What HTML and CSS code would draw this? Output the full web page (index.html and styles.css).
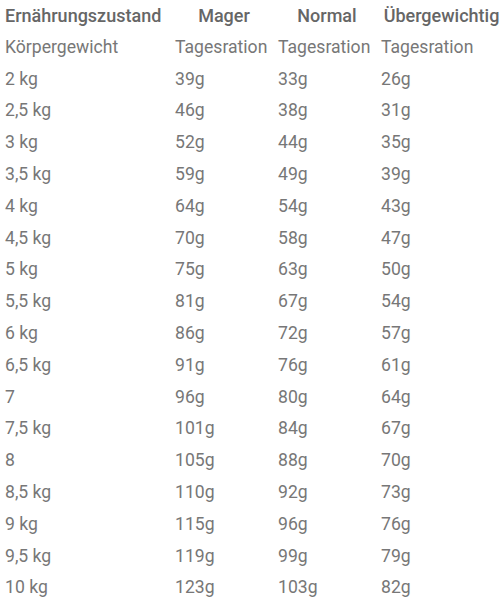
FILE: index.html
```html
<!DOCTYPE html>
<html lang="de">
<head>
<meta charset="utf-8">
<link rel="stylesheet" href="styles.css">
</head>
<body>
<table class="ration">
  <colgroup>
    <col class="c1"><col class="c2"><col class="c3"><col class="c4">
  </colgroup>
  <thead>
    <tr><th class="first">Ernährungszustand</th><th>Mager</th><th>Normal</th><th>Übergewichtig</th></tr>
  </thead>
  <tbody>
    <tr><td>Körpergewicht</td><td>Tagesration</td><td>Tagesration</td><td>Tagesration</td></tr>
    <tr><td>2 kg</td><td>39g</td><td>33g</td><td>26g</td></tr>
    <tr><td>2,5 kg</td><td>46g</td><td>38g</td><td>31g</td></tr>
    <tr><td>3 kg</td><td>52g</td><td>44g</td><td>35g</td></tr>
    <tr><td>3,5 kg</td><td>59g</td><td>49g</td><td>39g</td></tr>
    <tr><td>4 kg</td><td>64g</td><td>54g</td><td>43g</td></tr>
    <tr><td>4,5 kg</td><td>70g</td><td>58g</td><td>47g</td></tr>
    <tr><td>5 kg</td><td>75g</td><td>63g</td><td>50g</td></tr>
    <tr><td>5,5 kg</td><td>81g</td><td>67g</td><td>54g</td></tr>
    <tr><td>6 kg</td><td>86g</td><td>72g</td><td>57g</td></tr>
    <tr><td>6,5 kg</td><td>91g</td><td>76g</td><td>61g</td></tr>
    <tr><td>7</td><td>96g</td><td>80g</td><td>64g</td></tr>
    <tr><td>7,5 kg</td><td>101g</td><td>84g</td><td>67g</td></tr>
    <tr><td>8</td><td>105g</td><td>88g</td><td>70g</td></tr>
    <tr><td>8,5 kg</td><td>110g</td><td>92g</td><td>73g</td></tr>
    <tr><td>9 kg</td><td>115g</td><td>96g</td><td>76g</td></tr>
    <tr><td>9,5 kg</td><td>119g</td><td>99g</td><td>79g</td></tr>
    <tr><td>10 kg</td><td>123g</td><td>103g</td><td>82g</td></tr>
  </tbody>
</table>
</body>
</html>
```
FILE: styles.css
```css
html, body {
  margin: 0;
  padding: 0;
  background: #ffffff;
}

.ration {
  border-collapse: collapse;
  table-layout: fixed;
  width: 502px;
  font-family: Roboto, "Liberation Sans", sans-serif;
  font-size: 17.6px;
  color: #777777;
}

.c1 { width: 170px; }
.c2 { width: 103px; }
.c3 { width: 103px; }
.c4 { width: 126px; }

.ration th,
.ration td {
  height: 31.8px;
  padding: 0 0 0 5px;
  vertical-align: middle;
  white-space: nowrap;
  line-height: 1;
}

.ration th {
  font-size: 18px;
  font-weight: 500;
  color: #666666;
  text-align: center;
}

.ration th.first {
  text-align: left;
}

.ration th.last {
  text-align: left;
}

.ration td {
  font-weight: 400;
  text-align: left;
}
```
